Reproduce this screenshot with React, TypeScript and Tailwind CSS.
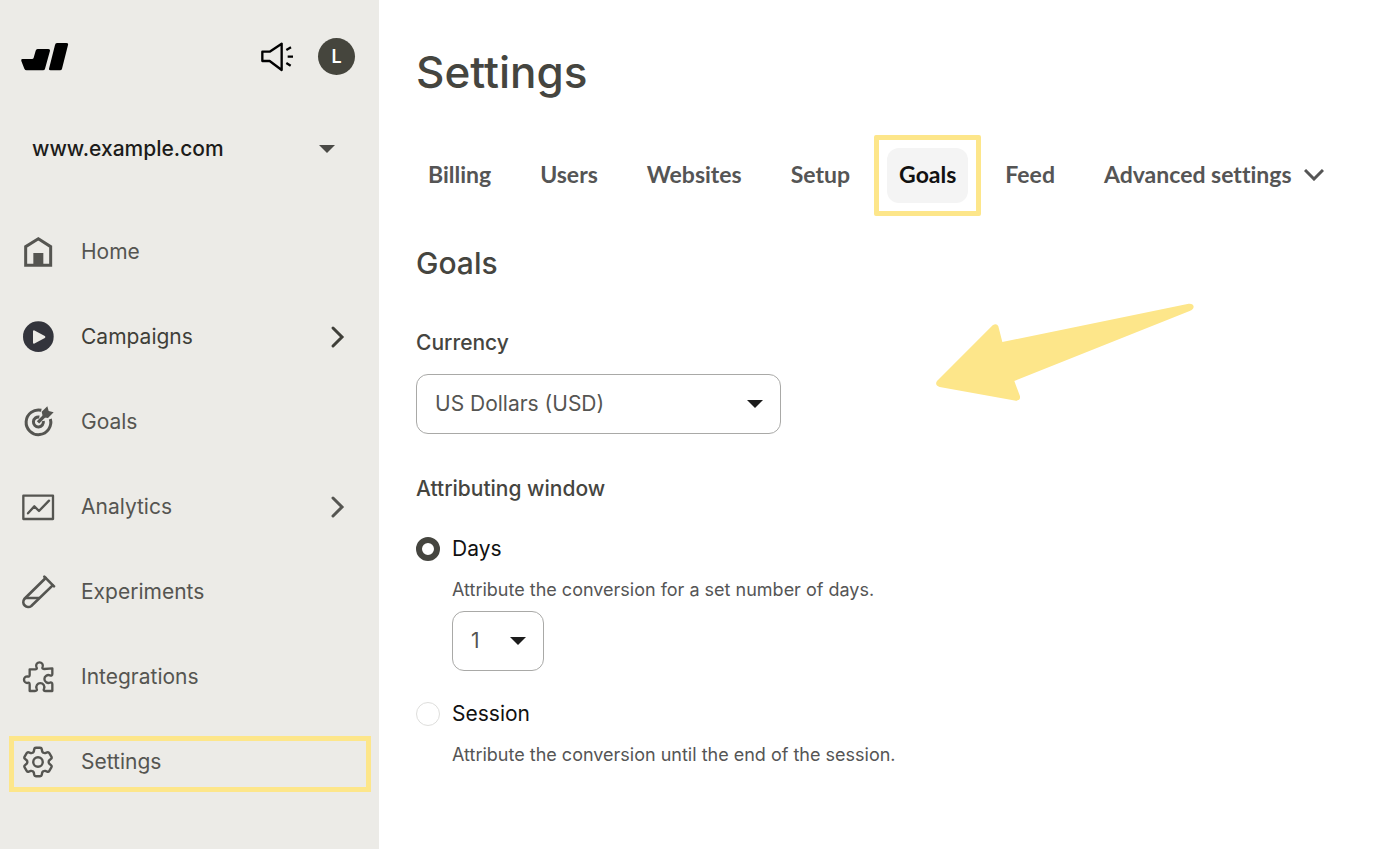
import { useState } from 'react'
import type { ReactNode } from 'react'
import { HiOutlineCog6Tooth } from 'react-icons/hi2'

type NavItem = {
  label: string
  icon: ReactNode
  strong?: boolean
  expandable?: boolean
  active?: boolean
}

const navItems: NavItem[] = [
  {
    label: 'Home',
    icon: (
      <svg viewBox="60 42 108 108" className="size-9" fill="none" stroke="currentColor" strokeWidth="9">
        <path d="M77 136V80l38-24 37 24v56z" />
        <path d="M100 99h30v37h-30z" fill="currentColor" stroke="none" />
      </svg>
    ),
  },
  {
    label: 'Campaigns',
    strong: true,
    expandable: true,
    icon: (
      <svg viewBox="60 297 108 108" className="size-9">
        <circle cx="115" cy="350" r="46" fill="#33343c" />
        <path d="M102 334v34l31-17z" fill="#ecebe7" stroke="#ecebe7" strokeWidth="6" strokeLinejoin="round" />
      </svg>
    ),
  },
  {
    label: 'Goals',
    icon: (
      <svg viewBox="60 552 108 108" className="size-9" fill="none" stroke="currentColor" strokeWidth="9">
        <path d="M124 571a37 37 0 1 0 27 26" />
        <path d="M118 591a15 15 0 1 0 12 12" />
        <path d="M114 607l24-24" strokeWidth="10" />
        <path d="M125 575l17-16 4 14 15 4-17 17-15-2z" fill="currentColor" stroke="none" />
      </svg>
    ),
  },
  {
    label: 'Analytics',
    expandable: true,
    icon: (
      <svg viewBox="60 57 108 108" className="size-9" fill="none" stroke="currentColor" strokeWidth="7" strokeLinecap="round" strokeLinejoin="round">
        <path d="M70 77h89v70H70z" />
        <path d="M84 130l19-21 14 14 30-31" />
      </svg>
    ),
  },
  {
    label: 'Experiments',
    icon: (
      <svg viewBox="60 312 108 108" className="size-9" fill="none" stroke="currentColor" strokeWidth="8" strokeLinecap="round">
        <path d="M133 320l29 29" />
        <path d="M137 324l-64 63a15 15 0 0 0 21 21l64-62" />
        <path d="M78 384h38" />
      </svg>
    ),
  },
  {
    label: 'Integrations',
    icon: (
      <svg viewBox="60 567 108 108" className="size-9" fill="none" stroke="currentColor" strokeWidth="7" strokeLinejoin="round">
        <path d="M89 598h17c6 0 5-4 3-8a10 10 0 1 1 19 0c-2 5-1 7 4 7l25-2v17c0 5-3 6-7 4a12 12 0 1 0 0 22c4-2 7 0 7 5v20h-20c-6 0-7-3-5-7a12 12 0 1 0-22 0c2 4 0 7-5 7H89v-19c0-6-3-7-7-5a10 10 0 1 1 0-20c4 2 7 1 7-4z" />
      </svg>
    ),
  },
  {
    label: 'Settings',
    active: true,
    icon: <HiOutlineCog6Tooth className="-mx-px size-[38px]" />,
  },
]

const tabs = ['Billing', 'Users', 'Websites', 'Setup', 'Goals', 'Feed', 'Advanced settings']

function Caret({ className }: { className?: string }) {
  return (
    <svg viewBox="0 0 16 8" className={`h-2 w-4 ${className ?? ''}`} fill="currentColor" aria-hidden="true">
      <path d="M0 0h16L8 8z" />
    </svg>
  )
}

function SelectBox({ id, label, options, className }: { id: string; label?: string; options: string[]; className: string }) {
  return (
    <div className={`relative ${className}`}>
      <select
        id={id}
        aria-label={label}
        className="h-15 w-full appearance-none rounded-xl border border-[#a9a9a7] bg-white pr-10 pb-px pl-[18px] text-[21px] text-[#555552]"
      >
        {options.map((option) => (
          <option key={option}>{option}</option>
        ))}
      </select>
      <Caret className="pointer-events-none absolute top-[26px] right-[18px] text-[#1c1c1c]" />
    </div>
  )
}

function Sidebar() {
  return (
    <aside className="w-[379px] shrink-0 bg-[#ecebe7] pb-10">
      <div className="flex items-center pt-[38px] pr-6 pl-5">
        <a href="#" aria-label="Dashboard">
          <svg viewBox="60 66 147 87" className="h-[29px] w-[49px]" fill="#000">
            <path d="M67 117h29q4 0 5-4l6-21q1-5 6-5h32q6 0 5 5l-15 54q-1 5-6 5H80q-5 0-7-5l-9-23q-2-6 3-6z" />
            <path d="M171 69h28q7 0 5 6l-18 71q-1 5-6 5h-28q-6 0-5-5l18-71q1-6 6-6z" />
          </svg>
        </a>
        <button type="button" aria-label="Announcements" className="ml-auto">
          <svg viewBox="780 63 102 93" className="h-[31px] w-[34px]" fill="none" stroke="#000" strokeWidth="7" strokeLinejoin="round">
            <path d="M787 95h22l36-24v79l-36-27h-22z" />
            <path d="M859 90l14-8M863 110h16M859 129l13 8" />
          </svg>
        </button>
        <button type="button" className="ml-6 size-[37px] rounded-full bg-[#45453d] text-lg font-semibold text-white">
          L
        </button>
      </div>

      <button type="button" className="mt-13 flex w-full items-center justify-between pr-11 pl-8 text-[21px] leading-11 font-medium text-[#1c1c1a]">
        www.example.com
        <Caret className="text-[#4a4a46]" />
      </button>

      <nav className="mt-[55px] flex flex-col gap-[29px] pr-2 pl-[9px]">
        {navItems.map((item) => (
          <a
            key={item.label}
            href="#"
            className={`flex h-14 items-center gap-[25px] border-5 pr-4 pb-1 pl-[6px] text-[21px] ${
              item.active ? 'border-[#fde68a]' : 'border-transparent'
            } ${item.strong ? 'text-[#3f3f39]' : 'text-[#555551]'}`}
          >
            {item.icon}
            {item.label}
            {item.expandable && (
              <svg viewBox="0 0 24 24" className="ml-auto size-6" fill="none" stroke="currentColor" strokeWidth="3" strokeLinecap="round">
                <path d="M7 3l9 9-9 9" />
              </svg>
            )}
          </a>
        ))}
      </nav>
    </aside>
  )
}

function Radio({ id, label, checked, onChange }: { id: string; label: string; checked: boolean; onChange: () => void }) {
  return (
    <div className="flex items-center gap-3">
      <input
        id={id}
        type="radio"
        name="window"
        checked={checked}
        onChange={onChange}
        className="size-6 appearance-none rounded-full border border-[#dededc] bg-white checked:border-6 checked:border-[#45453f]"
      />
      <label htmlFor={id} className="text-[21px] leading-8 text-[#111]">
        {label}
      </label>
    </div>
  )
}

export default function App() {
  const [attribution, setAttribution] = useState('days')

  return (
    <div className="flex min-h-screen bg-white font-[Inter,sans-serif]">
      <Sidebar />

      <main className="min-w-0 flex-1 pl-[37px]">
        <h1 className="mt-11 text-[44px] leading-14 font-medium text-[#45453f]">Settings</h1>

        {/* Tabs */}
        <div className="mt-12 flex gap-[25px] font-[Lato,sans-serif] text-[23px] leading-[53px] font-bold text-[#555] [font-variant-ligatures:none]">
          {tabs.map((tab) => (
            <button
              key={tab}
              type="button"
              className={`relative flex items-center gap-3 rounded-xl px-3 pb-0.5 whitespace-nowrap ${tab === 'Goals' ? 'bg-[#f4f4f4] text-[#111]' : ''}`}
            >
              {tab}
              {tab === 'Goals' && <span className="absolute -inset-[13px] rounded-xs border-5 border-[#fde68a]" />}
              {tab === 'Advanced settings' && (
                <svg viewBox="0 0 20 12" className="h-3 w-5" fill="none" stroke="currentColor" strokeWidth="3">
                  <path d="M1 1l9 9 9-9" />
                </svg>
              )}
            </button>
          ))}
        </div>

        <div className="mt-10 flex items-start">
          <form className="w-[520px] shrink-0">
            <h2 className="text-[30px] leading-10 font-medium text-[#45453f]">Goals</h2>

            <label htmlFor="currency" className="mt-11 block text-[21px] leading-8 font-medium text-[#45453f]">
              Currency
            </label>
            <SelectBox id="currency" options={['US Dollars (USD)']} className="mt-[15px] w-[365px]" />

            <fieldset className="mt-[39px]">
              <legend className="text-[21px] leading-8 font-medium text-[#45453f]">Attributing window</legend>
              <div className="mt-[28px]">
                <Radio id="days" label="Days" checked={attribution === 'days'} onChange={() => setAttribution('days')} />
                <p className="mt-[9px] ml-9 text-lg leading-8 text-[#555]">Attribute the conversion for a set number of days.</p>
                <SelectBox id="day-count" label="Number of days" options={['1']} className="mt-[5px] ml-9 w-[92px]" />
              </div>
              <div className="mt-[27px]">
                <Radio id="session" label="Session" checked={attribution === 'session'} onChange={() => setAttribution('session')} />
                <p className="mt-[9px] ml-9 text-lg leading-8 text-[#555]">Attribute the conversion until the end of the session.</p>
              </div>
            </fieldset>
          </form>

          {/* Pointer arrow */}
          <svg viewBox="77 68 777 294" className="mt-15 h-[98px] w-[259px]" fill="#fde68a" aria-hidden="true">
            <path d="M80 302L247 135q12-8 17 3l12 47L835 70q14-1 15 9-1 9-12 13L312 302l17 46q2 13-12 13L88 320q-16-5-8-18z" />
          </svg>
        </div>
      </main>
    </div>
  )
}
